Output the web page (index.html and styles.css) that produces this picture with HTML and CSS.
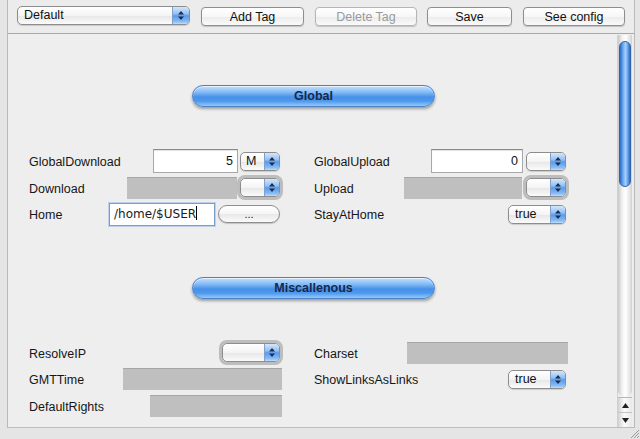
FILE: index.html
```html
<!DOCTYPE html>
<html>
<head>
<meta charset="utf-8">
<link rel="stylesheet" href="styles.css">
</head>
<body>
<div class="window">
  <div class="toolbar">
    <div class="popup popup-default"><span class="popup-text">Default</span><span class="stepper"><svg width="8" height="11" viewBox="0 0 8 11"><path d="M4 1 L7 4.5 H1 Z M4 10 L7 6.5 H1 Z" fill="#1b2d52"/></svg></span></div>
    <button class="btn btn-add">Add Tag</button>
    <button class="btn btn-del" disabled>Delete Tag</button>
    <button class="btn btn-save">Save</button>
    <button class="btn btn-cfg">See config</button>
  </div>
  <div class="panel">
    <div class="content">
      <section class="group group-global">
        <div class="pill">Global</div>
        <div class="grid">
          <div class="row">
            <span class="label">GlobalDownload</span>
            <div class="controls">
              <div class="field field-gd">5</div>
              <div class="popup popup-sm"><span class="popup-text">M</span><span class="stepper"><svg width="8" height="11" viewBox="0 0 8 11"><path d="M4 1 L7 4.5 H1 Z M4 10 L7 6.5 H1 Z" fill="#1b2d52"/></svg></span></div>
            </div>
          </div>
          <div class="row">
            <span class="label">GlobalUpload</span>
            <div class="controls">
              <div class="field field-gu">0</div>
              <div class="popup popup-sm"><span class="popup-text"></span><span class="stepper"><svg width="8" height="11" viewBox="0 0 8 11"><path d="M4 1 L7 4.5 H1 Z M4 10 L7 6.5 H1 Z" fill="#1b2d52"/></svg></span></div>
            </div>
          </div>
          <div class="row">
            <span class="label">Download</span>
            <div class="controls">
              <div class="gray gray-dl"></div>
              <div class="popup popup-sm popup-dis"><span class="popup-text"></span><span class="stepper"><svg width="8" height="11" viewBox="0 0 8 11"><path d="M4 1 L7 4.5 H1 Z M4 10 L7 6.5 H1 Z" fill="#1b2d52"/></svg></span></div>
            </div>
          </div>
          <div class="row">
            <span class="label">Upload</span>
            <div class="controls">
              <div class="gray gray-ul"></div>
              <div class="popup popup-sm popup-dis"><span class="popup-text"></span><span class="stepper"><svg width="8" height="11" viewBox="0 0 8 11"><path d="M4 1 L7 4.5 H1 Z M4 10 L7 6.5 H1 Z" fill="#1b2d52"/></svg></span></div>
            </div>
          </div>
          <div class="row">
            <span class="label">Home</span>
            <div class="controls">
              <div class="field field-home">/home/$USER<span class="caret"></span></div>
              <button class="round-btn">...</button>
            </div>
          </div>
          <div class="row">
            <span class="label">StayAtHome</span>
            <div class="controls">
              <div class="popup popup-bool"><span class="popup-text">true</span><span class="stepper"><svg width="8" height="11" viewBox="0 0 8 11"><path d="M4 1 L7 4.5 H1 Z M4 10 L7 6.5 H1 Z" fill="#1b2d52"/></svg></span></div>
            </div>
          </div>
        </div>
      </section>
      <section class="group group-misc">
        <div class="pill">Miscallenous</div>
        <div class="grid">
          <div class="row">
            <span class="label">ResolveIP</span>
            <div class="controls">
              <div class="popup popup-bool popup-dis"><span class="popup-text"></span><span class="stepper"><svg width="8" height="11" viewBox="0 0 8 11"><path d="M4 1 L7 4.5 H1 Z M4 10 L7 6.5 H1 Z" fill="#1b2d52"/></svg></span></div>
            </div>
          </div>
          <div class="row">
            <span class="label">Charset</span>
            <div class="controls">
              <div class="gray gray-cs"></div>
            </div>
          </div>
          <div class="row">
            <span class="label">GMTTime</span>
            <div class="controls">
              <div class="gray gray-gmt"></div>
            </div>
          </div>
          <div class="row">
            <span class="label">ShowLinksAsLinks</span>
            <div class="controls">
              <div class="popup popup-bool"><span class="popup-text">true</span><span class="stepper"><svg width="8" height="11" viewBox="0 0 8 11"><path d="M4 1 L7 4.5 H1 Z M4 10 L7 6.5 H1 Z" fill="#1b2d52"/></svg></span></div>
            </div>
          </div>
          <div class="row">
            <span class="label">DefaultRights</span>
            <div class="controls">
              <div class="gray gray-dr"></div>
            </div>
          </div>
          <div class="row"></div>
        </div>
      </section>
    </div>
    <div class="scrollbar">
      <div class="track"><div class="thumb"></div></div>
      <div class="arrows">
        <div class="arrow"><svg width="7" height="5" viewBox="0 0 7 5"><path d="M3.5 0 L7 5 H0 Z" fill="#222"/></svg></div>
        <div class="arrow arrow-down"><svg width="7" height="5" viewBox="0 0 7 5"><path d="M3.5 5 L7 0 H0 Z" fill="#222"/></svg></div>
      </div>
    </div>
  </div>
</div>
<div class="grip"><svg width="12" height="12" viewBox="0 0 12 12"><path d="M11 3 L3 11 M11 6 L6 11 M11 9 L9 11" stroke="#9a9a9a" stroke-width="1"/></svg></div>
</body>
</html>
```

FILE: styles.css
```css
* { box-sizing: border-box; }

html, body {
  margin: 0;
  padding: 0;
}

body {
  width: 640px;
  height: 439px;
  background: #e5e5e5;
  font-family: "Liberation Sans", Arial, sans-serif;
  font-size: 12.5px;
  color: #111;
  overflow: hidden;
}

.window {
  margin-left: 7px;
  width: 628px;
  height: 428px;
  border-left: 1px solid #b9b9b9;
  border-right: 1px solid #b9b9b9;
  border-bottom: 1px solid #bdbdbd;
  background: #ececec;
  display: flex;
  flex-direction: column;
}

.toolbar {
  height: 34px;
  flex: none;
  border-bottom: 1px solid #a9a9a9;
  padding: 6px 0 0 9px;
  display: flex;
  align-items: flex-start;
  gap: 11px;
}

/* popup buttons */
.popup {
  display: flex;
  align-items: stretch;
  height: 19px;
  border: 1px solid #8d8d8d;
  border-radius: 5px;
  background: linear-gradient(#ffffff, #f4f4f4 50%, #e6e6e6 51%, #fbfbfb);
  overflow: hidden;
  box-shadow: 0 1px 1px rgba(0,0,0,0.15);
}

.popup-text {
  flex: 1;
  padding-left: 6px;
  line-height: 17px;
  font-size: 12.5px;
}

.stepper {
  width: 17px;
  flex: none;
  display: flex;
  align-items: center;
  justify-content: center;
  background: linear-gradient(#d3e7fc, #93c0f3 40%, #5a9ae8 52%, #86bbf5 85%, #c0ddfb);
  border-left: 1px solid #7f9fcc;
}

.popup-default {
  width: 173px;
}

.popup-sm {
  width: 40px;
  height: 19px;
}

.popup-sm .stepper,
.popup-bool .stepper {
  width: 15px;
}

.popup-bool {
  width: 58px;
  height: 19px;
}

.popup-sm .popup-text {
  padding-left: 5px;
}

.popup-dis {
  box-shadow: 0 0 0 3px #bdbdbd;
}

/* push buttons */
.btn {
  height: 19px;
  margin-top: 1px;
  border: 1px solid #8e8e8e;
  border-radius: 4px;
  background: linear-gradient(#ffffff, #f7f7f7 50%, #ebebeb 51%, #fafafa);
  font-family: "Liberation Sans", Arial, sans-serif;
  font-size: 12.5px;
  color: #111;
  padding: 1px 0 0 0;
  line-height: 16px;
  box-shadow: 0 1px 1px rgba(0,0,0,0.18);
}

.btn-add { width: 103px; }
.btn-del { width: 102px; color: #9a9a9a; border-color: #b5b5b5; }
.btn-save { width: 85px; margin-left: -1px; }
.btn-cfg { width: 102px; }

/* panel */
.panel {
  flex: 1;
  display: flex;
  background: #eeeeee;
  min-height: 0;
}

.content {
  width: 609px;
  flex: none;
  padding-left: 21px;
}

.group-global {
  padding-top: 51px;
}

.group-misc {
  padding-top: 49px;
}

.pill {
  margin-left: 163px;
  width: 243px;
  height: 22px;
  border-radius: 11px;
  border: 1px solid #4d82c6;
  background: linear-gradient(#c4e0fc, #86bdf5 30%, #4790ea 55%, #4d98ec 75%, #95c8f8);
  box-shadow: 0 2px 3px rgba(0,0,0,0.35), inset 0 1px 0 rgba(255,255,255,0.6);
  text-align: center;
  font-weight: bold;
  font-size: 12.5px;
  line-height: 20px;
  color: #13294d;
}

.grid {
  margin-top: 41px;
  display: grid;
  grid-template-columns: 251px 252px;
  grid-auto-rows: 26.5px;
  column-gap: 34px;
}

.row {
  display: flex;
  align-items: center;
  justify-content: space-between;
}

.label {
  white-space: nowrap;
  padding-top: 2px;
  color: #161616;
}

.controls {
  display: flex;
  align-items: center;
  gap: 2px;
}

.field {
  height: 24px;
  background: #fff;
  border: 1px solid #a8a8a8;
  border-top-color: #8a8a8a;
  box-shadow: inset 0 1px 1px rgba(0,0,0,0.12);
  text-align: right;
  padding-right: 4px;
  line-height: 22px;
  font-size: 12.5px;
}

.field-gd { width: 85px; }
.field-gu { width: 92px; margin-right: 1px; }

.field-home {
  width: 106px;
  height: 23px;
  text-align: left;
  padding-left: 4px;
  line-height: 21px;
  border: 1px solid #7b9ccc;
  box-shadow: 0 0 0 1px #bcd1ee;
  margin-right: 1px;
  font-family: "DejaVu Sans", sans-serif;
  font-size: 12px;
  color: #1a1a1a;
}

.caret {
  display: inline-block;
  width: 1px;
  height: 14px;
  background: #000;
  vertical-align: -2px;
}

.round-btn {
  width: 62px;
  height: 18px;
  border: 1px solid #8e8e8e;
  border-radius: 9px;
  background: linear-gradient(#ffffff, #f5f5f5 50%, #e8e8e8 51%, #fafafa);
  box-shadow: 0 1px 1px rgba(0,0,0,0.18);
  padding: 0;
  font-family: "Liberation Sans", Arial, sans-serif;
  font-size: 11px;
  line-height: 14px;
  color: #222;
}

.gray {
  height: 22px;
  background: #bfbfbf;
  border-top: 1px solid #a6a6a6;
}

.gray-dl { width: 110px; margin-right: 1px; }
.gray-ul { width: 118px; margin-right: 2px; }
.gray-cs { width: 161px; margin-right: -2px; }
.gray-gmt { width: 159px; margin-right: -2px; }
.gray-dr { width: 132px; margin-right: -2px; }

/* scrollbar */
.scrollbar {
  width: 15px;
  flex: none;
  margin: 1px 0 0 0;
  display: flex;
  flex-direction: column;
  border-left: 1px solid #d0d0d0;
}

.track {
  flex: 1;
  background: linear-gradient(90deg, #c9c9c9, #f2f2f2 30%, #ffffff 55%, #e4e4e4 85%, #cfcfcf);
  padding: 6px 0 0 0;
  border-radius: 0 0 7px 7px;
}

.thumb {
  height: 146px;
  margin: 0 1px;
  border-radius: 6px;
  background: linear-gradient(90deg, #2f69c4, #6aa8ee 30%, #a6d0fa 55%, #5f9fec 80%, #2e66bf);
  border: 1px solid #3263ad;
}

.arrows {
  height: 30px;
  flex: none;
  background: linear-gradient(90deg, #d2d2d2, #fbfbfb 45%, #e8e8e8);
  border-top: 1px solid #b8b8b8;
  display: flex;
  flex-direction: column;
}

.arrow {
  flex: 1;
  display: flex;
  align-items: center;
  justify-content: center;
}

.arrow-down {
  border-top: 1px solid #c4c4c4;
}

.grip {
  position: absolute;
  right: 0;
  bottom: 0;
  width: 12px;
  height: 12px;
}

.grip svg {
  display: block;
}
```
